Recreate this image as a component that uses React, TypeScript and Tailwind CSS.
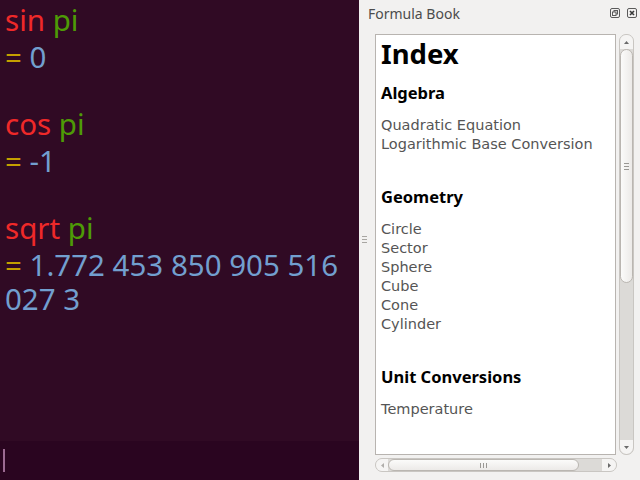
import React from "react";

const sections = [
  { title: "Algebra", items: ["Quadratic Equation", "Logarithmic Base Conversion"] },
  { title: "Geometry", items: ["Circle", "Sector", "Sphere", "Cube", "Cone", "Cylinder"] },
  { title: "Unit Conversions", items: ["Temperature"] },
];

const results = [
  { fn: "sin", arg: "pi", lines: ["0"] },
  { fn: "cos", arg: "pi", lines: ["-1"] },
  { fn: "sqrt", arg: "pi", lines: ["1.772 453 850 905 516", "027 3"] },
];

const Calculator = () => (
  <div className="flex flex-col w-[359px] h-full bg-[#300a24]">
    <div className="flex-1 px-[5px] pt-[3px] text-[29.5px] leading-[34px] font-['Noto_Sans',sans-serif]">
      {results.map((r) => (
        <div key={r.fn} className="mb-[33px]">
          <div className="mb-[3px]">
            <span className="text-[#ef2929]">{r.fn}</span>{" "}
            <span className="text-[#4e9a06]">{r.arg}</span>
          </div>
          {r.lines.map((l, i) => (
            <div key={i} className="text-[#729fcf]">
              {i === 0 && <span className="text-[#c4a000]">= </span>}
              {l}
            </div>
          ))}
        </div>
      ))}
    </div>
    <div className="h-[39px] bg-[#2a0520] flex items-center pl-[3px]">
      <div className="w-[2px] h-[23px] bg-[#9c6a92]" />
    </div>
  </div>
);

const VScroll = () => (
  <div className="w-[15px] h-[421px] ml-[3px] flex flex-col rounded-[7px] border border-[#c9c6c2] bg-[#dcdad7] overflow-hidden">
    <div className="h-[14px] flex items-center justify-center bg-[#f5f4f3]">
      <svg width="5" height="3" viewBox="0 0 5 3"><path d="M0 3 L2.5 0 L5 3 Z" fill="#6a6a6a" /></svg>
    </div>
    <div className="h-[234px] rounded-[7px] border border-[#bab6b1] bg-gradient-to-r from-[#fbfbfa] to-[#eceae8] flex items-center justify-center">
      <div className="flex flex-col gap-[2px]">
        <div className="w-[5px] h-[1px] bg-[#9a9894]" />
        <div className="w-[5px] h-[1px] bg-[#9a9894]" />
        <div className="w-[5px] h-[1px] bg-[#9a9894]" />
      </div>
    </div>
    <div className="flex-1" />
    <div className="h-[14px] flex items-center justify-center bg-[#f5f4f3] rounded-b-[7px]">
      <svg width="5" height="3" viewBox="0 0 5 3"><path d="M0 0 L2.5 3 L5 0 Z" fill="#6a6a6a" /></svg>
    </div>
  </div>
);

const HScroll = () => (
  <div className="w-[242px] h-[14px] mt-[3px] flex rounded-[7px] border border-[#c9c6c2] bg-[#dcdad7] overflow-hidden">
    <div className="w-[12px] flex items-center justify-center bg-[#f5f4f3]">
      <svg width="3" height="5" viewBox="0 0 3 5"><path d="M3 0 L0 2.5 L3 5 Z" fill="#b0aeab" /></svg>
    </div>
    <div className="w-[191px] rounded-[7px] border border-[#bab6b1] bg-gradient-to-b from-[#fbfbfa] to-[#eceae8] flex items-center justify-center">
      <div className="flex gap-[2px]">
        <div className="w-[1px] h-[5px] bg-[#9a9894]" />
        <div className="w-[1px] h-[5px] bg-[#9a9894]" />
        <div className="w-[1px] h-[5px] bg-[#9a9894]" />
      </div>
    </div>
    <div className="flex-1" />
    <div className="w-[14px] flex items-center justify-center bg-[#f5f4f3]">
      <svg width="3" height="5" viewBox="0 0 3 5"><path d="M0 0 L3 2.5 L0 5 Z" fill="#6a6a6a" /></svg>
    </div>
  </div>
);

const FormulaBook = () => (
  <div className="flex-1 h-full bg-[#f2f1f0] flex flex-col relative">
    <div className="h-[26px] flex items-center justify-between pl-[7px] pr-[3px]">
      <span className="text-[14px] text-[#4c4c4c] font-['Noto_Sans',sans-serif]">Formula Book</span>
      <div className="flex gap-[7px]">
        <svg width="10" height="10" viewBox="0 0 10 10">
          <rect x="0.5" y="0.5" width="9" height="9" rx="1.5" fill="none" stroke="#5a5a5a" />
          <rect x="4" y="2.5" width="3.5" height="3.5" fill="none" stroke="#5a5a5a" />
          <rect x="2.5" y="4" width="3.5" height="3.5" fill="#f2f1f0" stroke="#5a5a5a" />
        </svg>
        <svg width="10" height="10" viewBox="0 0 10 10">
          <rect x="0.5" y="0.5" width="9" height="9" rx="1.5" fill="none" stroke="#5a5a5a" />
          <path d="M3 3 L7 7 M7 3 L3 7" stroke="#3a3a3a" strokeWidth="1.6" />
        </svg>
      </div>
    </div>
    <div className="absolute left-[1px] top-[236px] flex flex-col gap-[2px]">
      <div className="w-[5px] h-[1px] bg-[#a8a6a2]" />
      <div className="w-[5px] h-[1px] bg-[#a8a6a2]" />
      <div className="w-[5px] h-[1px] bg-[#a8a6a2]" />
    </div>
    <div className="pl-[14px] pt-[8px]">
      <div className="flex">
        <div className="w-[241px] h-[421px] bg-white border border-[#b8b4b0] pl-[5px] pt-[1px] overflow-hidden">
          <div className="text-[27.5px] leading-[36px] font-bold text-black font-['Noto_Sans',sans-serif]">Index</div>
          {sections.map((s) => (
            <div key={s.title} className="mb-[32px]">
              <div className="mt-[10px] text-[16.5px] leading-[22px] font-bold text-black font-['Noto_Sans',sans-serif]">{s.title}</div>
              <div className="mt-[12px]">
                {s.items.map((it) => (
                  <div key={it} className="text-[14.5px] leading-[19px] text-[#555555] font-['DejaVu_Sans',sans-serif]">{it}</div>
                ))}
              </div>
            </div>
          ))}
        </div>
        <VScroll />
      </div>
      <HScroll />
    </div>
  </div>
);

export default function App() {
  return (
    <div className="w-[640px] h-[480px] flex overflow-hidden">
      <Calculator />
      <div className="w-[2px] h-full bg-[#f2f1f0]" />
      <FormulaBook />
    </div>
  );
}
